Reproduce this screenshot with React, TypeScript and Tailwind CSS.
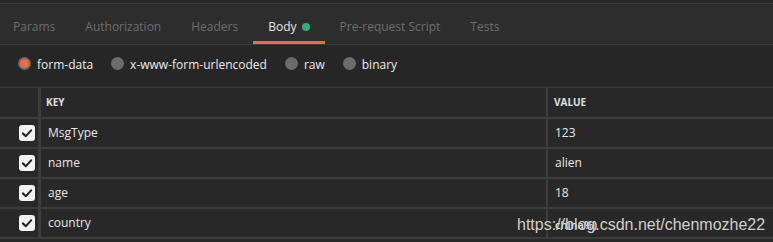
import React from 'react';

const tabs = [
  { label: 'Params', active: false },
  { label: 'Authorization', active: false },
  { label: 'Headers', active: false },
  { label: 'Body', active: true },
  { label: 'Pre-request Script', active: false },
  { label: 'Tests', active: false },
];

const modes = [
  { label: 'form-data', selected: true },
  { label: 'x-www-form-urlencoded', selected: false },
  { label: 'raw', selected: false },
  { label: 'binary', selected: false },
];

const rows = [
  { key: 'MsgType', value: '123' },
  { key: 'name', value: 'alien' },
  { key: 'age', value: '18' },
  { key: 'country', value: 'china%)' },
];

function Check() {
  return (
    <div className="flex h-4 w-4 items-center justify-center rounded-[3px] bg-[#f2f2f2]">
      <svg viewBox="0 0 16 16" className="h-3 w-3">
        <path d="M2.5 8.5 L6.5 12.2 L13.5 4.5" fill="none" stroke="#222" strokeWidth="2.8" strokeLinecap="round" strokeLinejoin="round" />
      </svg>
    </div>
  );
}

export default function App() {
  return (
    <div className="relative h-[242px] w-[773px] overflow-hidden bg-[#282828] font-['Open_Sans',sans-serif]">
      <div className="h-[3px] bg-[#262626]" />
      <div className="-ml-[2px] flex h-[42px] items-stretch border-y border-[#3c3c3c] bg-[#2d2d2d]">
        {tabs.map((t) => (
          <div
            key={t.label}
            className={
              'flex items-center px-[15px] pt-[5px] text-[12px] ' +
              (t.active ? 'border-b-[3px] border-[#f26b3a] pt-[8px] text-[#e6e6e6]' : 'text-[#6e6e6e]')
            }
          >
            <span>{t.label}</span>
            {t.active && <span className="ml-[5px] h-2 w-2 rounded-full bg-[#26b47f]" />}
          </div>
        ))}
      </div>
      <div className="flex h-[43px] items-center gap-[18px] border-b border-[#3c3c3c] bg-[#262626] pb-[6px] pl-[18px]">
        {modes.map((m) => (
          <div key={m.label} className="flex items-center gap-[6px] text-[12px] text-[#ececec]">
            {m.selected ? (
              <span className="flex h-[13px] w-[13px] items-center justify-center rounded-full bg-[#6b6b6b]">
                <span className="h-[9px] w-[9px] rounded-full bg-[#f26b3a]" />
              </span>
            ) : (
              <span className="h-[13px] w-[13px] rounded-full bg-[#6b6b6b]" />
            )}
            <span className="mt-[3px]">{m.label}</span>
          </div>
        ))}
      </div>
      <div className="grid grid-cols-[41px_507px_1fr]">
        <div className="h-[31px] border-r-[3px] border-b-[2px] border-[#3c3c3c]" />
        <div className="flex h-[31px] items-center border-r-[2px] border-b-[2px] border-[#3c3c3c] pl-[5px] text-[10px] font-bold text-[#e0e0e0]">
          KEY
        </div>
        <div className="flex h-[31px] items-center border-b-[2px] border-[#3c3c3c] pl-[6px] text-[10px] font-bold text-[#e0e0e0]">
          VALUE
        </div>
        {rows.map((r) => (
          <React.Fragment key={r.key}>
            <div className="flex h-[30px] items-center justify-end border-r-[3px] border-b-[2px] border-[#3c3c3c] pr-[3px]">
              <Check />
            </div>
            <div className="flex h-[30px] items-center border-r-[2px] border-b-[2px] border-[#3c3c3c] pl-[7px] text-[12px] text-[#e6e6e6]">
              {r.key}
            </div>
            <div
              className={
                'flex h-[30px] items-center border-b-[2px] border-[#3c3c3c] pl-[7px] text-[#e6e6e6] ' +
                (r.key === 'country' ? 'pt-[4px] text-[11px] font-semibold' : 'text-[12px]')
              }
            >
              {r.value}
            </div>
          </React.Fragment>
        ))}
      </div>
      <div className="absolute left-[517px] top-[213px] font-['Liberation_Sans',sans-serif] text-[16px] text-[#cfcfcf]">
        https://blog.csdn.net/chenmozhe22
      </div>
    </div>
  );
}
